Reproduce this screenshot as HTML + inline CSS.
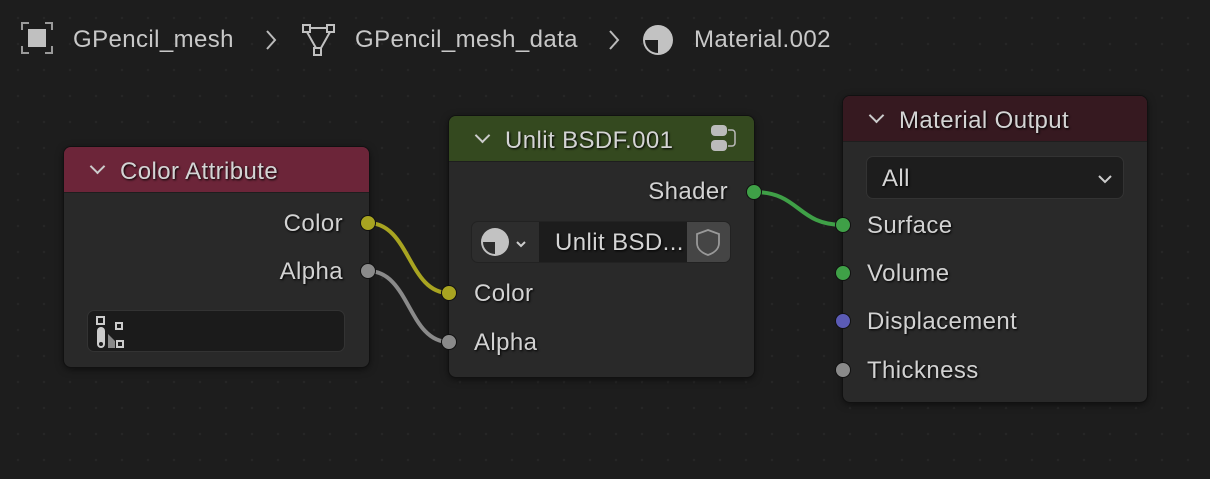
<!DOCTYPE html>
<html><head><style>
body{margin:0;width:1210px;height:479px;background:#1d1d1d;font-family:"Liberation Sans",sans-serif;color:#d0d0d0;overflow:hidden;position:relative;
background-image:radial-gradient(circle,#262626 1px,transparent 1.5px);background-size:26px 26px;background-position:5px 5px}
.t{position:absolute;font-size:24px;letter-spacing:.4px;white-space:nowrap;line-height:1}
.node{position:absolute;background:#292929;border-radius:7px;box-shadow:0 0 0 1px #111,0 2px 8px rgba(0,0,0,.6);overflow:hidden}
.hd{height:45px;position:relative;border-bottom:1px solid #1e1e1e}
.hd span{position:absolute;left:56px;top:11px;font-size:24px;letter-spacing:.4px;color:#d4d4d4;text-shadow:1px 1px 2px #000}
.hd i{position:absolute;left:28px;top:14px;width:9px;height:9px;border-right:2px solid #ccc;border-bottom:2px solid #ccc;transform:rotate(45deg)}
.sock{position:absolute;width:16px;height:16px;border-radius:50%;border:1.5px solid #111;box-sizing:border-box}
.lbl{position:absolute;font-size:24px;letter-spacing:.4px;color:#d2d2d2;text-shadow:1px 1px 2px #000;line-height:1}
</style></head><body>
<svg style="position:absolute;left:0;top:0" width="1210" height="479">
<path d="M368 223 C410 223 408 293 449 293" stroke="#a8a421" stroke-width="4" fill="none"/>
<path d="M368 271 C410 271 408 342 449 342" stroke="#8a8a8a" stroke-width="4" fill="none"/>
<path d="M754 192 C800 192 797 225 843 225" stroke="#3fa047" stroke-width="4" fill="none"/>
<g stroke="#9a9a9a" stroke-width="2" fill="none">
<path d="M22 30v-7h7M45 23h7v7M52 46v7h-7M29 53h-7v-7"/>
</g>
<rect x="28" y="29" width="18" height="18" fill="#c0c0c0"/>
<path d="M267 31l8 9-8 9M610 31l8 9-8 9" stroke="#bbb" stroke-width="2" fill="none"/>
<g stroke="#c0c0c0" stroke-width="2" fill="none">
<rect x="303" y="25" width="7" height="7"/><rect x="327" y="25" width="7" height="7"/><rect x="314" y="48" width="7" height="7"/>
<path d="M310 28h17M307 32l9 16M330 32l-9 16"/>
</g>
<circle cx="658" cy="40" r="15" fill="#c2c2c2"/>
<path d="M658 40h-13a13 13 0 0 0 13 13z" fill="#1d1d1d"/>
</svg>
<div class="t" style="left:73px;top:28px;color:#c8c8c8">GPencil_mesh</div>
<div class="t" style="left:355px;top:28px;color:#c8c8c8">GPencil_mesh_data</div>
<div class="t" style="left:694px;top:28px;color:#c8c8c8">Material.002</div>

<div class="node" style="left:64px;top:147px;width:305px;height:220px">
<div class="hd" style="background:#6c2539"><i></i><span>Color Attribute</span></div>
<div class="lbl" style="right:26px;top:65px">Color</div>
<div class="lbl" style="right:26px;top:113px">Alpha</div>
<div style="position:absolute;left:23px;top:163px;width:256px;height:40px;background:#1b1b1b;border:1px solid #333;border-radius:7px">
<svg width="40" height="40" style="position:absolute;left:6px;top:3px"><g fill="#ccc"><rect x="3" y="3" width="7" height="7" fill="none" stroke="#ccc" stroke-width="2"/><rect x="3" y="13" width="8" height="21" rx="4"/><path d="M14 34v-14l7 7v7z" fill="#888"/><rect x="22" y="9" width="6" height="6" fill="none" stroke="#ccc" stroke-width="2"/><rect x="23" y="27" width="6" height="6" fill="none" stroke="#ccc" stroke-width="2"/></g><circle cx="7" cy="30" r="2" fill="#1b1b1b"/></svg>
</div>
</div>
<div class="sock" style="left:360px;top:215px;background:#a8a421"></div>
<div class="sock" style="left:360px;top:263px;background:#8a8a8a"></div>

<div class="node" style="left:449px;top:116px;width:305px;height:261px">
<div class="hd" style="background:#34491f"><i></i><span>Unlit BSDF.001</span>
<svg width="34" height="34" style="position:absolute;right:14px;top:6px"><rect x="5" y="3" width="16" height="11" rx="4" fill="#bbb"/><rect x="5" y="18" width="16" height="11" rx="4" fill="#bbb"/><path d="M22 8h4a3 3 0 0 1 3 3v10a3 3 0 0 1-3 3h-4" stroke="#bbb" stroke-width="1.5" fill="none"/></svg></div>
<div class="lbl" style="right:26px;top:64px">Shader</div>
<div style="position:absolute;left:22px;top:105px;width:258px;height:40px;border-radius:7px;background:#2d2d2d;border:1px solid #222;overflow:hidden">
<div style="position:absolute;left:67px;top:0;width:148px;height:40px;background:#1c1c1c"></div>
<div style="position:absolute;left:215px;top:0;width:43px;height:40px;background:#454545"></div>
<div class="lbl" style="left:83px;top:9px;color:#d4d4d4">Unlit BSD...</div>
<svg width="60" height="40" style="position:absolute;left:8px;top:4px"><circle cx="15" cy="16" r="14" fill="#c2c2c2"/><path d="M15 16h-12a12 12 0 0 0 12 12z" fill="#2d2d2d"/><path d="M37 16l4 4 4-4" stroke="#ccc" stroke-width="2" fill="none"/></svg>
<svg width="43" height="40" style="position:absolute;left:215px;top:0"><path d="M21 8l11 4v9c0 6-5 10-11 12-6-2-11-6-11-12v-9z" stroke="#999" stroke-width="1.8" fill="none"/></svg>
</div>
<div class="lbl" style="left:25px;top:166px">Color</div>
<div class="lbl" style="left:25px;top:215px">Alpha</div>
</div>
<div class="sock" style="left:746px;top:184px;background:#3fa047"></div>
<div class="sock" style="left:441px;top:285px;background:#a8a421"></div>
<div class="sock" style="left:441px;top:334px;background:#8a8a8a"></div>

<div class="node" style="left:843px;top:96px;width:304px;height:306px">
<div class="hd" style="background:#361920"><i></i><span>Material Output</span></div>
<div style="position:absolute;left:23px;top:60px;width:256px;height:41px;background:#1d1d1d;border:1px solid #333;border-radius:7px">
<div class="lbl" style="left:15px;top:10px;color:#d4d4d4">All</div>
<svg width="20" height="20" style="position:absolute;right:8px;top:12px"><path d="M4 7l6 6 6-6" stroke="#ccc" stroke-width="2" fill="none"/></svg>
</div>
<div class="lbl" style="left:24px;top:118px">Surface</div>
<div class="lbl" style="left:24px;top:166px">Volume</div>
<div class="lbl" style="left:24px;top:214px">Displacement</div>
<div class="lbl" style="left:24px;top:263px">Thickness</div>
</div>
<div class="sock" style="left:835px;top:217px;background:#3fa047"></div>
<div class="sock" style="left:835px;top:265px;background:#3fa047"></div>
<div class="sock" style="left:835px;top:313px;background:#5b5bb5"></div>
<div class="sock" style="left:835px;top:362px;background:#8a8a8a"></div>
</body></html>
